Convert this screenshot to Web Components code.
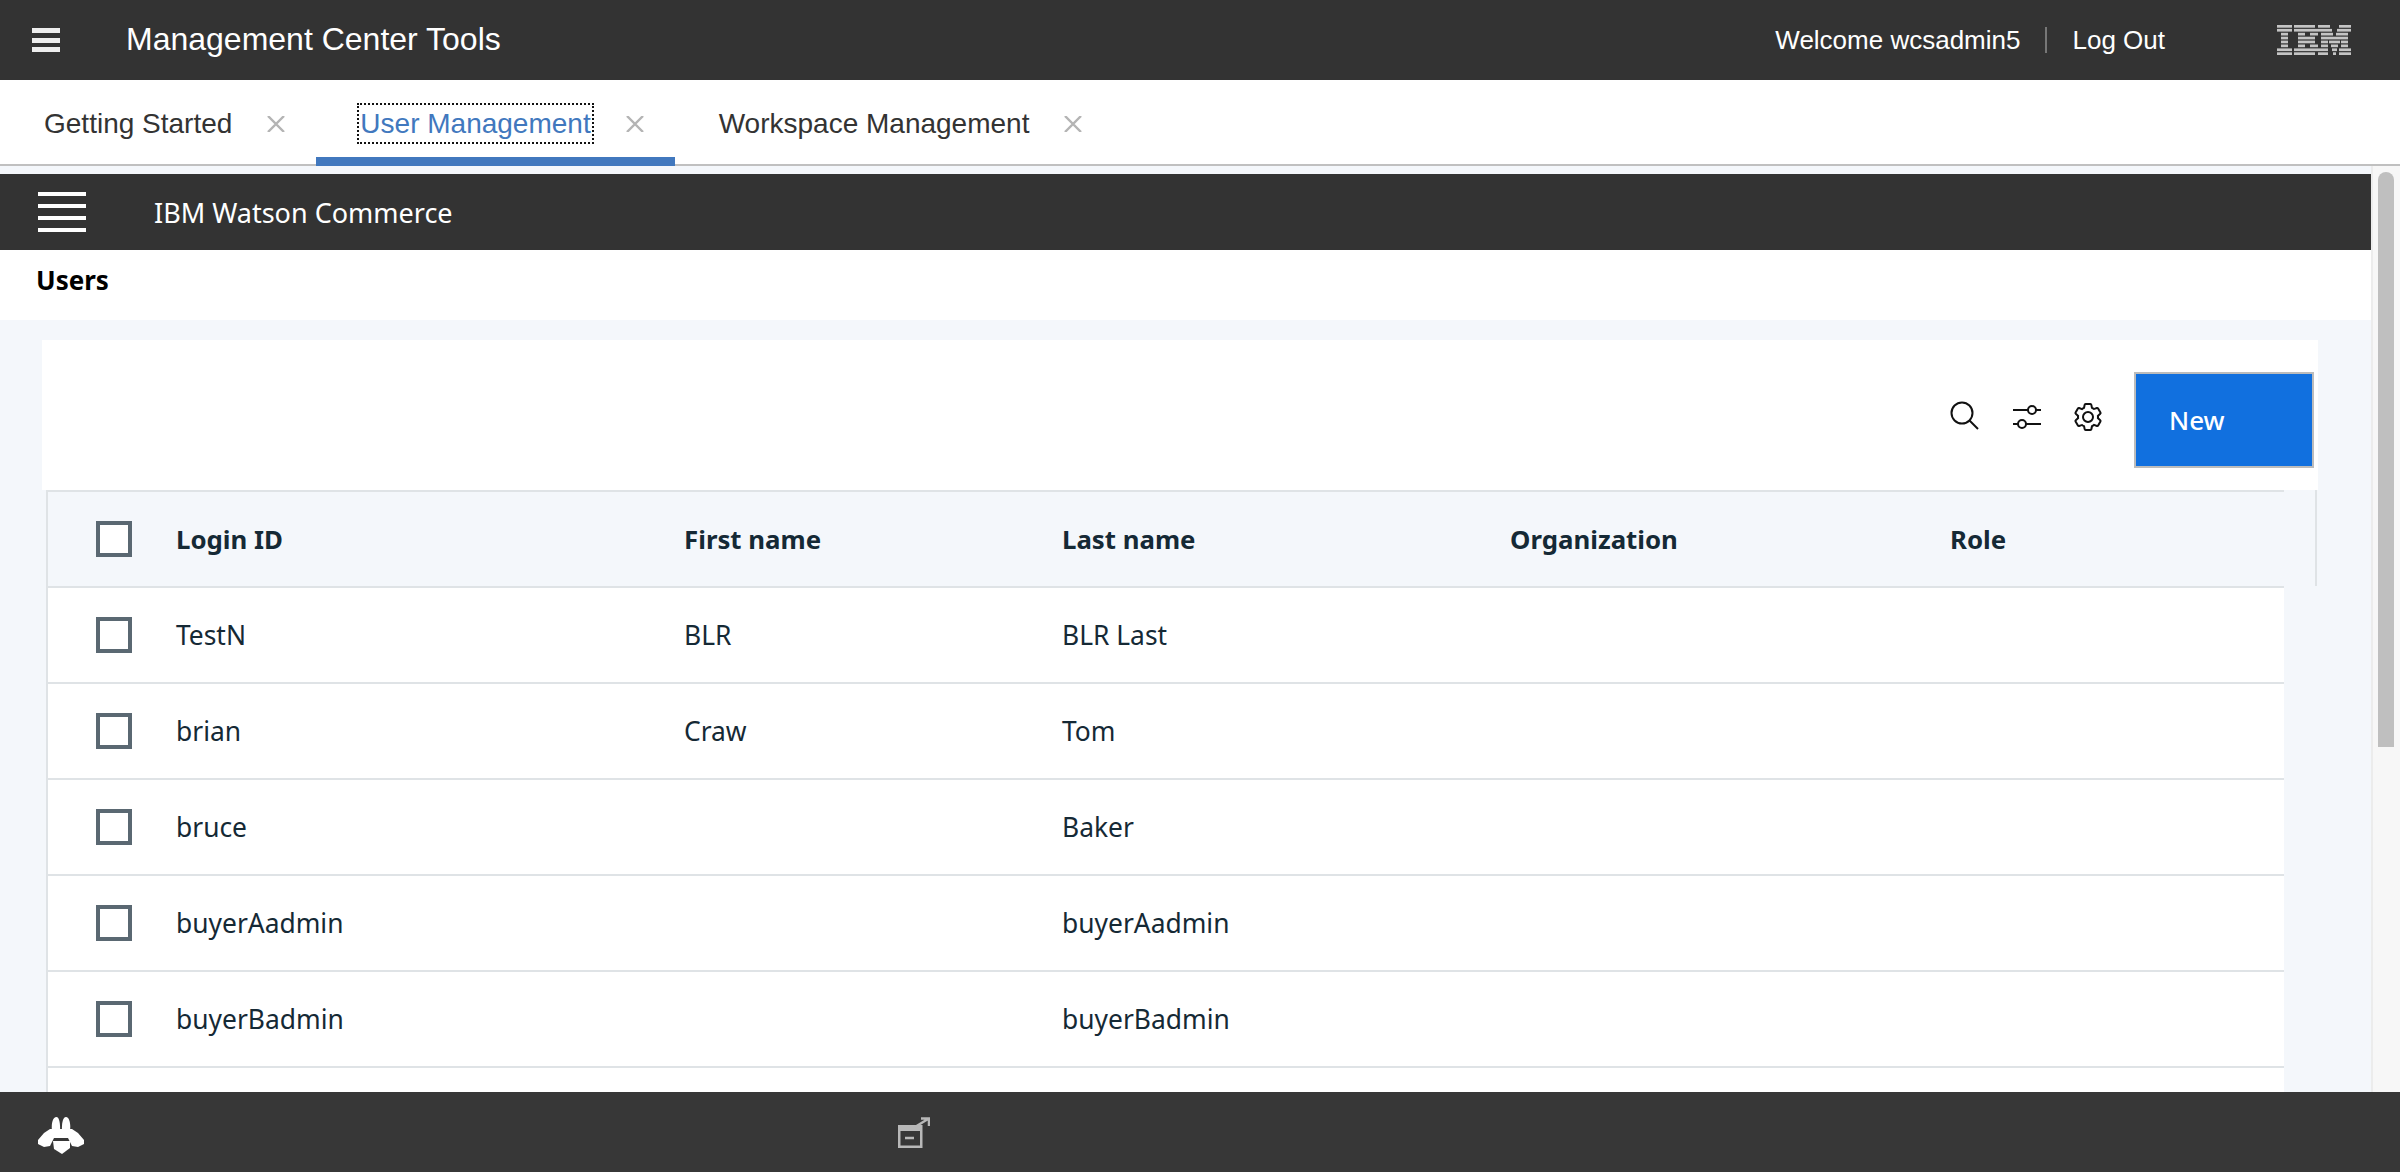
<!DOCTYPE html>
<html>
<head>
<meta charset="utf-8">
<title>Management Center Tools</title>
<style>
    html, body { margin: 0; height: 100%; overflow: hidden; }
    body { font-family: "Liberation Sans", Arial, sans-serif; }
</style>
</head>
<body>

<mc-app>
    <mc-topbar slot="top" user="wcsadmin5"></mc-topbar>
    <mc-tabs slot="tabs">
        <mc-tab>Getting Started</mc-tab>
        <mc-tab active>User Management</mc-tab>
        <mc-tab>Workspace Management</mc-tab>
    </mc-tabs>

    <wc-header>IBM Watson Commerce</wc-header>
    <wc-title>Users</wc-title>
    <user-table>
        <user-row head><span>Login ID</span><span>First name</span><span>Last name</span><span>Organization</span><span>Role</span></user-row>
        <user-row><span>TestN</span><span>BLR</span><span>BLR Last</span><span></span><span></span></user-row>
        <user-row><span>brian</span><span>Craw</span><span>Tom</span><span></span><span></span></user-row>
        <user-row><span>bruce</span><span></span><span>Baker</span><span></span><span></span></user-row>
        <user-row><span>buyerAadmin</span><span></span><span>buyerAadmin</span><span></span><span></span></user-row>
        <user-row><span>buyerBadmin</span><span></span><span>buyerBadmin</span><span></span><span></span></user-row>
        <user-row></user-row>
    </user-table>

    <mc-footer slot="bottom"></mc-footer>
</mc-app>

<script>
const PLEX = `"Noto Sans", "Open Sans", sans-serif`;

class McApp extends HTMLElement {
    constructor() {
        super();
        this.attachShadow({mode: "open"});
    }
    connectedCallback() {
        this.shadowRoot.innerHTML = `
            <style>
                :host { display: flex; flex-direction: column; height: 100vh; background: #fff; }
                #main { flex: 1; min-height: 0; display: flex; overflow: hidden; }
                #content { flex: 1; min-width: 0; background: #f4f7fb; padding-top: 8px; overflow: hidden; }
                #track { width: 29px; background: #f7f7f7; border-left: 2px solid #ececec; box-sizing: border-box; padding: 6px 6px 0 5px; }
                #thumb { height: 575px; background: #bfbfbf; border-radius: 8px 8px 0 0; }
            </style>
            <slot name="top"></slot>
            <slot name="tabs"></slot>
            <div id="main">
                <div id="content"><slot></slot></div>
                <div id="track"><div id="thumb"></div></div>
            </div>
            <slot name="bottom"></slot>
        `;
    }
}

class McTopbar extends HTMLElement {
    constructor() {
        super();
        this.attachShadow({mode: "open"});
    }
    connectedCallback() {
        // stripes of the logo: [x from, x to] per bar
        const bars = [
            [[0,15],[17,38],[41,53],[62,74]],
            [[0,15],[17,41],[41,55],[60,74]],
            [[4,11],[21,28],[33,41],[44,56],[59,71]],
            [[4,11],[21,38],[44,71]],
            [[4,11],[21,38],[44,51],[52,63],[64,71]],
            [[4,11],[21,28],[33,41],[44,51],[54,61],[64,71]],
            [[0,15],[17,41],[41,51],[55,60],[62,74]],
            [[0,15],[17,38],[41,51],[56,59],[62,74]]
        ];
        let rects = "";
        bars.forEach((row, i) => row.forEach(b => {
            rects += `<rect x="${b[0]}" y="${i * 3.9}" width="${b[1] - b[0]}" height="2.7"/>`;
        }));

        this.shadowRoot.innerHTML = `
            <style>
                :host { display: flex; align-items: center; height: 80px; background: #333; color: #fff; font-size: 26px; }
                #menu { margin-left: 32px; width: 28px; height: 24px; display: flex; flex-direction: column; justify-content: space-between; }
                #menu i { height: 5px; background: #eee; }
                #name { margin-left: 66px; font-size: 32px; flex: 1; position: relative; top: -1px; }
                #sep { width: 2px; height: 26px; background: #777; margin: 0 25px; }
                svg { margin: 0 49px 0 112px; fill: #c4c4c4; display: block; }
            </style>
            <div id="menu"><i></i><i></i><i></i></div>
            <div id="name">Management Center Tools</div>
            <span>Welcome ${this.getAttribute("user")}</span>
            <div id="sep"></div>
            <span>Log Out</span>
            <svg width="74" height="30" viewBox="0 0 74 30">${rects}</svg>
        `;
    }
}

class McTabs extends HTMLElement {
    constructor() {
        super();
        this.attachShadow({mode: "open"});
    }
    connectedCallback() {
        this.shadowRoot.innerHTML = `
            <style>
                :host { display: flex; height: 86px; box-sizing: border-box; background: #fff; border-bottom: 2px solid #c0c0c0; }
            </style>
            <slot></slot>
        `;
    }
}

class McTab extends HTMLElement {
    constructor() {
        super();
        this.attachShadow({mode: "open"});
    }
    connectedCallback() {
        this.shadowRoot.innerHTML = `
            <style>
                :host { display: flex; align-items: center; box-sizing: border-box; padding: 10px 31px 0 44px; border-bottom: 7px solid transparent; color: #333; font-size: 28px; }
                :host([active]) { color: #4178be; border-bottom: 9px solid #4178be; margin-bottom: -2px; }
                :host([active]) #label { outline: 2px dotted #111; outline-offset: 1px; }
                #label { line-height: 35px; }
                svg { margin-left: 35px; display: block; stroke: #b4b4b4; stroke-width: 2.4; }
            </style>
            <span id="label"><slot></slot></span>
            <svg width="18" height="16" viewBox="0 0 18 16"><path d="M1 0L17 16M17 0L1 16"/></svg>
        `;
    }
}

class WcHeader extends HTMLElement {
    constructor() {
        super();
        this.attachShadow({mode: "open"});
    }
    connectedCallback() {
        this.shadowRoot.innerHTML = `
            <style>
                :host { display: flex; align-items: center; height: 76px; background: #333; color: #fff; font-family: ${PLEX}; font-size: 27px; }
                #menu { margin: 0 68px 0 38px; width: 48px; height: 40px; display: flex; flex-direction: column; justify-content: space-between; }
                #menu i { height: 4px; background: #fff; }
            </style>
            <div id="menu"><i></i><i></i><i></i><i></i></div>
            <slot></slot>
        `;
    }
}

class WcTitle extends HTMLElement {
    constructor() {
        super();
        this.attachShadow({mode: "open"});
    }
    connectedCallback() {
        this.shadowRoot.innerHTML = `
            <style>
                :host { display: block; height: 70px; box-sizing: border-box; background: #fff; padding: 12px 0 0 36px; color: #000; font-family: ${PLEX}; font-weight: 700; font-size: 26px; line-height: 36px; }
            </style>
            <slot></slot>
        `;
    }
}

class UserTable extends HTMLElement {
    constructor() {
        super();
        this.attachShadow({mode: "open"});
    }
    connectedCallback() {
        this.shadowRoot.innerHTML = `
            <style>
                :host { display: block; margin: 20px 53px 0 42px; position: relative; font-family: ${PLEX}; }
                #bar { height: 150px; box-sizing: border-box; background: #fff; display: flex; align-items: center; justify-content: flex-end; padding: 4px 4px 0 0; }
                #bar svg { display: block; }
                #search { margin-right: 31px; }
                #sliders { margin-right: 30px; }
                #gear { margin-right: 30px; }
                #new { width: 180px; height: 96px; margin-top: 6px; box-sizing: border-box; border: 2px solid #bcbcbc; background: #1170df; color: #fff; font-size: 26px; font-weight: 500; display: flex; align-items: center; padding-left: 33px; }
                #rows { margin: 0 34px 0 4px; background: #fff; border-left: 2px solid #dfe3e6; border-top: 2px solid #dfe3e6; }
                /* little tick at the end of the header row */
                #tick { position: absolute; left: 2273px; top: 150px; width: 2px; height: 96px; background: #dfe3e6; }
            </style>
            <div id="bar">
                <svg id="search" width="32" height="32" viewBox="0 0 32 32" fill="none" stroke="#111" stroke-width="2"><circle cx="13" cy="12" r="10.5"/><path d="M20.5 19.5L29 28"/></svg>
                <svg id="sliders" width="30" height="30" viewBox="0 0 30 30" fill="none" stroke="#111" stroke-width="2"><path d="M1 8H16M24 8H29M1 22H6M14 22H29"/><circle cx="20" cy="8" r="4"/><circle cx="10" cy="22" r="4"/></svg>
                <svg id="gear" width="32" height="32" viewBox="0 0 32 32" fill="#111"><path d="M27,16.76c0-.25,0-.5,0-.76s0-.51,0-.77l1.92-1.68A2,2,0,0,0,29.3,11L26.94,7a2,2,0,0,0-1.73-1,2,2,0,0,0-.64.1l-2.43.82a11.35,11.35,0,0,0-1.31-.75l-.51-2.52a2,2,0,0,0-2-1.61H13.64a2,2,0,0,0-2,1.61l-.51,2.52a11.48,11.48,0,0,0-1.32.75L7.43,6.06A2,2,0,0,0,6.79,6,2,2,0,0,0,5.06,7L2.7,11a2,2,0,0,0,.41,2.51L5,15.24c0,.25,0,.5,0,.76s0,.51,0,.77L3.11,18.45A2,2,0,0,0,2.7,21L5.06,25a2,2,0,0,0,1.73,1,2,2,0,0,0,.64-.1l2.43-.82a11.35,11.35,0,0,0,1.31.75l.51,2.52a2,2,0,0,0,2,1.61h4.72a2,2,0,0,0,2-1.61l.51-2.52a11.48,11.48,0,0,0,1.32-.75l2.42.82a2,2,0,0,0,.64.1,2,2,0,0,0,1.73-1L29.3,21a2,2,0,0,0-.41-2.51ZM25.21,24l-3.43-1.16a8.86,8.86,0,0,1-2.71,1.57L18.36,28H13.64l-.71-3.55a9.36,9.36,0,0,1-2.7-1.57L6.79,24,4.43,20l2.72-2.4a8.9,8.9,0,0,1,0-3.13L4.43,12,6.79,8l3.43,1.16a8.86,8.86,0,0,1,2.71-1.57L13.64,4h4.72l.71,3.55a9.36,9.36,0,0,1,2.7,1.57L25.21,8,27.57,12l-2.72,2.4a8.9,8.9,0,0,1,0,3.13L27.57,20Z"/><path d="M16,22a6,6,0,1,1,6-6A5.94,5.94,0,0,1,16,22Zm0-10a3.91,3.91,0,0,0-4,4,3.91,3.91,0,0,0,4,4,3.91,3.91,0,0,0,4-4A3.91,3.91,0,0,0,16,12Z"/></svg>
                <div id="new">New</div>
            </div>
            <div id="rows"><slot></slot></div>
            <div id="tick"></div>
        `;
    }
}

class UserRow extends HTMLElement {
    constructor() {
        super();
        this.attachShadow({mode: "open"});
    }
    connectedCallback() {
        this.shadowRoot.innerHTML = `
            <style>
                :host { display: grid; grid-template-columns: 36px 44px 508px 378px 448px 440px 1fr; padding-left: 48px; align-items: center; height: 96px; box-sizing: border-box; border-bottom: 2px solid #dfe3e6; background: #fff; color: #152935; font-size: 26.4px; }
                :host([head]) { background: #f4f7fb; font-weight: 700; font-size: 25.8px; }
                #box { width: 36px; height: 36px; box-sizing: border-box; border: 4px solid #5a6872; background: #fff; grid-column: 1; }
                #gap { grid-column: 2; }
            </style>
            <div id="box"></div><div id="gap"></div>
            <slot></slot>
        `;
    }
}

class McFooter extends HTMLElement {
    constructor() {
        super();
        this.attachShadow({mode: "open"});
    }
    connectedCallback() {
        this.shadowRoot.innerHTML = `
            <style>
                :host { display: flex; align-items: center; height: 80px; background: #373737; }
                #bee { margin: 6px 813px 0 37px; display: block; fill: #fff; }
                #win { margin-top: 1px; display: block; fill: none; stroke: #b8b8b8; }
            </style>
            <svg id="bee" width="48" height="38" viewBox="0 0 48 38">
                <path d="M15 15C14 7 16 1 19.5 1C22 1 23.5 7 23 15Z"/>
                <path d="M25 15C24.5 7 26 1 29 1C32 1 34 7 33 15Z"/>
                <path d="M13 13H35L41 17L47 24V28L41 31L35 30L31 22H17L13 30L7 31L1 28V24L7 17Z"/>
                <path d="M16 25H33V32L25 38L17 33Z"/>
            </svg>
            <svg id="win" width="32" height="31" viewBox="0 0 32 31">
                <rect x="1.25" y="9.25" width="22" height="20.5" stroke-width="2.5"/>
                <path d="M1 12H23" stroke-width="4"/>
                <path d="M7 21H16" stroke-width="2.5"/>
                <path d="M17 10L30 2M23 1.5H31V9" stroke-width="2.5"/>
            </svg>
        `;
    }
}

customElements.define("mc-app", McApp);
customElements.define("mc-topbar", McTopbar);
customElements.define("mc-tabs", McTabs);
customElements.define("mc-tab", McTab);
customElements.define("wc-header", WcHeader);
customElements.define("wc-title", WcTitle);
customElements.define("user-table", UserTable);
customElements.define("user-row", UserRow);
customElements.define("mc-footer", McFooter);
</script>
</body>
</html>
